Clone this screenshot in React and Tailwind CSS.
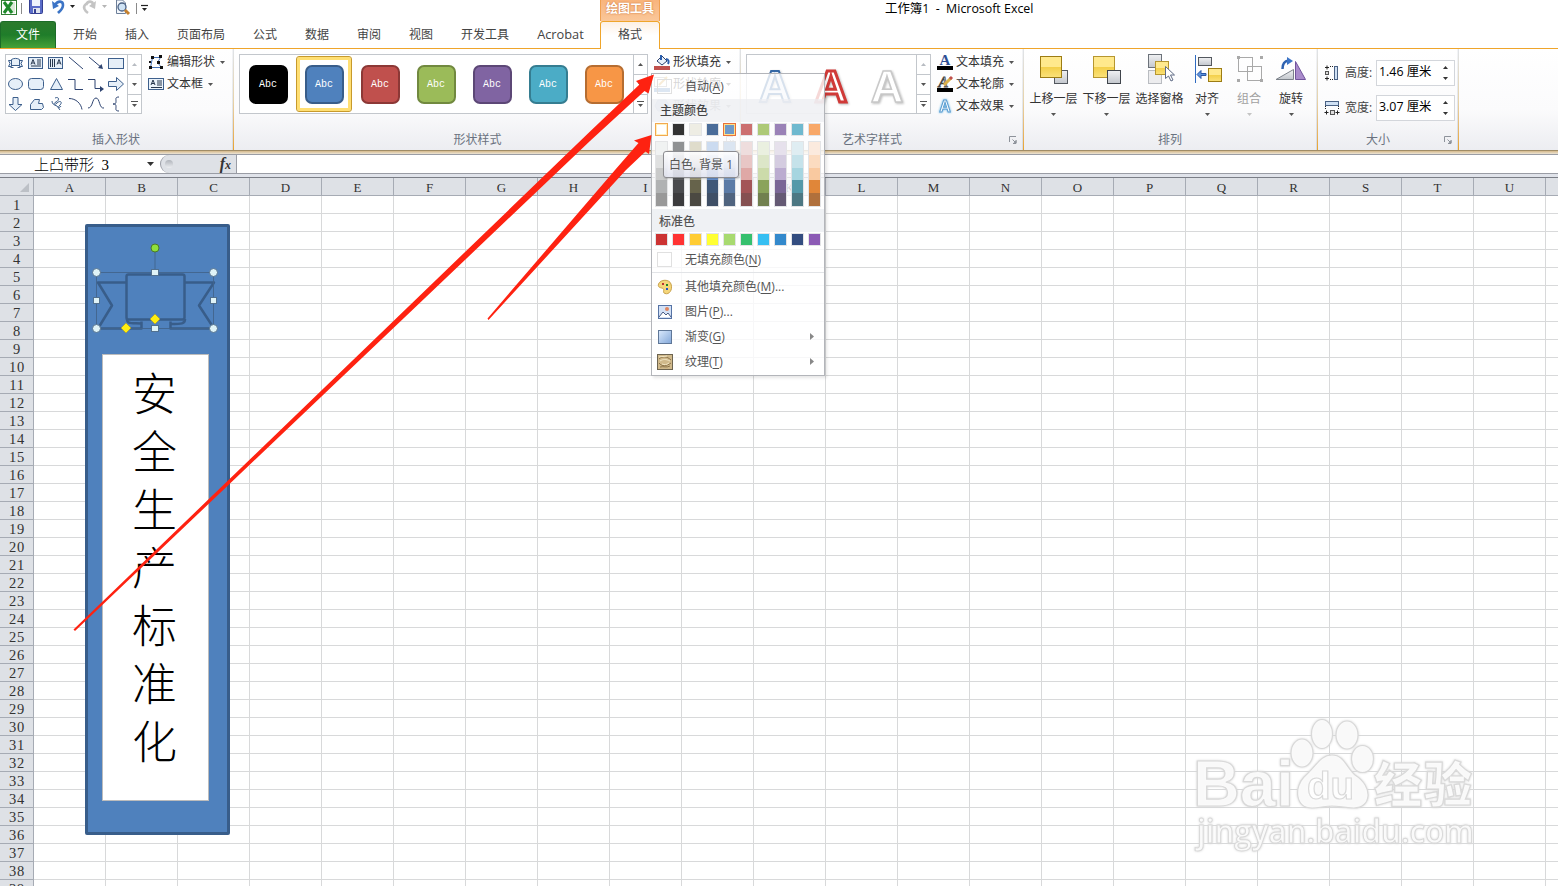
import React from 'react';

const TABS = ['开始', '插入', '页面布局', '公式', '数据', '审阅', '视图', '开发工具', 'Acrobat'];
const COLUMNS = 'ABCDEFGHIJKLMNOPQRSTU'.split('');
const ROWS = Array.from({ length: 39 }, (_, i) => i + 1);

const SHAPE_STYLES = [
  { fill: '#000000', line: '#000000' },
  { fill: '#4f81bd', line: '#385d8a', selected: true },
  { fill: '#c0504d', line: '#8c3836' },
  { fill: '#9bbb59', line: '#71893f' },
  { fill: '#8064a2', line: '#5c4776' },
  { fill: '#4bacc6', line: '#357d91' },
  { fill: '#f79646', line: '#b66d31' },
];

const THEME_TOP = ['#ffffff', '#333333', '#eeede4', '#4a6c99', '#6f99c8', '#cc6f6f', '#adc977', '#9a82b7', '#6fb9cf', '#f8a869'];

const THEME_SHADES = [
  ['#f0f2f2', '#dfe0e0', '#c9caca', '#b0b2b3', '#999999'],
  ['#8f9193', '#77787a', '#5f6063', '#4a4b4e', '#3c3c3e'],
  ['#dfdccb', '#cdc8ae', '#a49f7c', '#66634b', '#4b4942'],
  ['#cbdbf0', '#a3bfe6', '#6a94d0', '#3f5878', '#3f4f66'],
  ['#dbe5f1', '#bccfe7', '#8aaad4', '#5b7ba6', '#50647f'],
  ['#eedddd', '#e8c6c5', '#dfa8a6', '#a35557', '#855051'],
  ['#eaf0e0', '#dce6c8', '#ccdbaa', '#8aa35b', '#71804f'],
  ['#e6e1ec', '#d4cce0', '#bbacd0', '#7a6796', '#655a74'],
  ['#dfedf2', '#c5e2ea', '#a6d5e0', '#5499a9', '#4d7883'],
  ['#fbeade', '#fbdbc0', '#f9c9a0', '#e08639', '#b0703c'],
];

const STANDARD = ['#cc3333', '#ff3333', '#ffcc33', '#ffff33', '#a8da70', '#36c06e', '#36bff2', '#3389cc', '#334d80', '#8c5bb5'];

const Caret = ({ className = '' }) => (
  <svg className={`shrink-0 ${className}`} width="5" height="3" viewBox="0 0 5 3" fill="currentColor">
    <path d="M0 0h5L2.500 3z" />
  </svg>
);

const ScrollButtons = ({ topDisabled }) => (
  <div className="flex w-[14px] flex-col border-l border-[#c3c7cc] text-[#555]">
    <div className={`flex h-[20px] items-center justify-center border-b border-[#c3c7cc] ${topDisabled ? 'text-[#b8bcc2]' : ''}`}>
      <Caret className="rotate-180" />
    </div>
    <div className="flex h-[20px] items-center justify-center border-b border-[#c3c7cc]">
      <Caret />
    </div>
    <div className="flex flex-1 flex-col items-center justify-center gap-[2px]">
      <div className="h-px w-[7px] bg-[#555]"></div>
      <Caret />
    </div>
  </div>
);

const Launcher = ({ className = '' }) => (
  <svg className={className} width="8" height="8" viewBox="0 0 8 8" fill="none" stroke="#8d929a">
    <path d="M.5 6V.5H7M3.500 3.500l3 3M7 4v3.500H4" />
    <path d="M4.500 7h3V4z" fill="#8d929a" stroke="none" />
  </svg>
);

const GroupDivider = () => (
  <div className="flex w-[2px] shrink-0">
    <div className="w-px bg-linear-to-b from-[#f3f4f6] to-[#d5dae2]"></div>
    <div className="w-px bg-linear-to-b from-[#dfe3e8] via-[#e6d3ab] to-[#e8a32a]"></div>
  </div>
);

const Group = ({ label, width, labelShift = '', launcher, children }) => (
  <div className={`flex shrink-0 flex-col ${width}`}>
    <div className="h-[80px] pt-[5px]">{children}</div>
    <div className="flex h-[21px] items-center">
      <span className={`flex-1 text-center text-[#6a7280] ${labelShift}`}>{label}</span>
      {launcher && <Launcher className="mr-[5px]" />}
    </div>
  </div>
);

/* ---------- quick access bar ---------- */

const QuickAccess = () => (
  <div className="flex h-[21px] items-start">
    <svg width="150" height="17" viewBox="0 0 150 17">
      <rect x="1.500" y=".5" width="15" height="14" fill="#fff" stroke="#2f7d32" />
      <rect x="9" y="2" width="6" height="11" fill="#d9ead6" />
      <path d="M4 2l8 11M12 2L4 13" stroke="#1f8a2c" strokeWidth="3" />
      <path d="M21.500 3v11M136.500 3v11" stroke="#8a8a8a" />
      <rect x="29.500" y="-1" width="13" height="14.500" rx="1" fill="#5a6cc8" stroke="#343f92" />
      <rect x="32" y="0" width="8" height="6" fill="#eef3fc" />
      <rect x="33" y="8" width="7" height="5" fill="#dfe4ee" />
      <rect x="34" y="9" width="2" height="4" fill="#343f92" />
      <path d="M55 5c3-5 8-4 8 0 0 4-3 6-5 8" fill="none" stroke="#3c74c6" strokeWidth="2.600" />
      <path d="M52 1l1 8 6-3z" fill="#3c74c6" />
      <path d="M70 5h5l-2.500 3z" fill="#222" />
      <path d="M86 5c2-5 7-4 7 0M86 4c-4 3-1 7 2 9" fill="none" stroke="#c4c4c4" strokeWidth="2.600" />
      <path d="M96 1l-1 8-6-3z" fill="#c4c4c4" />
      <path d="M102 5h5l-2.500 3z" fill="#b5b5b5" />
      <path d="M116.500 0v13.500h9V3l-3-3z" fill="#f4f7fb" stroke="#6d7f99" />
      <circle cx="122" cy="7" r="4" fill="#cfe3f5" stroke="#4a6184" strokeWidth="1.300" />
      <path d="M125 10l4 4" stroke="#c6812e" strokeWidth="3" />
      <path d="M141 5.500h7" stroke="#222" strokeWidth="1.200" />
      <path d="M142 8h5l-2.500 3z" fill="#222" />
    </svg>
    <div className="ml-[450px] flex h-[21px] w-[60px] items-start justify-center border-x border-[#f0a050] bg-linear-to-b from-[#f8b47c] to-[#fac79a] font-bold text-white">
      <span className="leading-[17px] [text-shadow:0_0_2px_#c5692a]">绘图工具</span>
    </div>
    <div className="ml-[225px] whitespace-pre leading-[17px] text-[12.400px] text-black">{'工作簿1  -  Microsoft Excel'}</div>
  </div>
);

const TabBar = () => (
  <div className="flex h-[28px] shrink-0">
    <div className="flex h-[28px] w-[600px] items-stretch border-b border-[#efa52b]">
      <div className="mr-[3px] flex w-[56px] items-center justify-center rounded-t-[3px] border border-b-0 border-[#1c6b28] bg-linear-to-b from-[#2b7a2c] via-[#1f7d2a] to-[#46a238] text-white">
        文件
      </div>
      {TABS.map((tab) => (
        <div key={tab} className="flex items-center px-[14px] whitespace-nowrap text-[#444]">
          {tab === 'Acrobat' ? <span className="text-[12.800px] leading-none">{tab}</span> : tab}
        </div>
      ))}
    </div>
    <div className="flex w-[60px] items-center justify-center rounded-t-[3px] border-x border-t border-[#efa52b] bg-linear-to-b from-[#fdf0e4] to-white to-50% pb-px text-[#444]">
      格式
    </div>
    <div className="flex-1 border-b border-[#efa52b]"></div>
  </div>
);

/* ---------- ribbon ---------- */

const ShapeIcons = () => (
  <svg width="121" height="57" viewBox="0 0 121 57" fill="#e6eff8" stroke="#3d5f8c">
    <path d="M2.500 5.500h3v6h-3l1.500-3zM16.500 5.500h-3v6h3l-1.500-3zM5.500 4.500v6h8v-6c-2-1.500-6-1.500-8 0zM4.500 12.500h3M11.500 12.500h3" />
    <rect x="22.500" y="2.500" width="14" height="11" />
    <path d="M25 9.500l2-5 2 5M26 8h2M31 5h4M31 7h4M31 9h4M25 11h10" fill="none" stroke="#26364d" />
    <rect x="42.500" y="2.500" width="14" height="11" />
    <path d="M44.500 4v8M46.500 4v8M48.500 4v8M51 9.500l2-5 2 5M52 8h2" fill="none" stroke="#26364d" />
    <path d="M63 2l14 12M83 2l13 11" fill="none" stroke="#2d4370" />
    <path d="M97 14l-5-1 3.500-4z" fill="#2d4370" stroke="none" />
    <rect x="102.500" y="3.500" width="15" height="10" />
    <ellipse cx="9.500" cy="29" rx="7" ry="5.500" />
    <rect x="22.500" y="23.500" width="15" height="11" rx="3" />
    <path d="M44.500 34.500L50.500 23.500l6 11z" />
    <path d="M62 24.500h7v10h8M82 24.500h7v9h7" fill="none" stroke="#2d4370" />
    <path d="M98 34l-4-3v6z" fill="#2d4370" stroke="none" />
    <path d="M102.500 26.500h8v-4l7 6.500-7 6.500v-4h-8z" />
    <path d="M7 42.500h5v7h4l-6.500 6-6.500-6h4z" />
    <path d="M24.500 54.500v-5l4-5h5l-1 4h4l1 4-2 2z" />
    <path d="M49 43c5-2 4 3 1 4s-2 4 1 1 6-1 3 2-1 4 1 1M46 46c0 3 2 4 5 5l3 4" fill="none" />
    <path d="M63 43.500c7 0 12 5 13 11M82 53c5 0 4-10 8-10s3 11 8 10M113 42c-4 0-3 2-3 4s0 3-3 3c3 0 3 1 3 3s-1 4 3 4" fill="none" stroke="#2d4370" />
  </svg>
);

const DropLabel = ({ icon, children, caret = 'text-[#555]' }) => (
  <div className="flex h-[22px] items-center gap-[3px] whitespace-nowrap text-[#333]">
    {icon}
    <span>{children}</span>
    <Caret className={`ml-[2px] ${caret}`} />
  </div>
);

const Icon = ({ children }) => (
  <svg className="shrink-0 overflow-visible" width="16" height="16" viewBox="0 0 16 16">
    {children}
  </svg>
);

const InsertShapes = () => (
  <Group label="插入形状" width="w-[232px]">
    <div className="flex">
      <div className="ml-[5px] flex h-[60px] w-[137px] border border-[#c3c7cc] bg-white">
        <ShapeIcons />
        <ScrollButtons topDisabled />
      </div>
      <div className="-mt-[3px] ml-[6px]">
        <DropLabel
          icon={
            <Icon>
              <path d="M4.500 3.500h8l-3 5 4 5h-11l2-10" fill="none" stroke="#4472b8" />
              <path d="M3 2h3v3H3zM11 1h3v3h-3zM1 12h3v3H1zM12 12h3v3h-3zM9 7h3v3H9zM1 7h2v2H1z" fill="#111" />
            </Icon>
          }
        >
          编辑形状
        </DropLabel>
        <DropLabel
          icon={
            <Icon>
              <rect x=".5" y="2.500" width="15" height="11" fill="#eaf2fa" stroke="#3d5f8c" />
              <path d="M3 9l2-5 2 5M4 7.500h2M9 5h5M9 7h5M9 9h5M3 11.500h11" fill="none" stroke="#26364d" />
            </Icon>
          }
        >
          文本框
        </DropLabel>
      </div>
    </div>
  </Group>
);

const ShapeStyles = () => (
  <Group label="形状样式" width="w-[505px]" launcher labelShift="pr-[5px]">
    <div className="flex">
      <div className="ml-[5px] flex h-[60px] w-[409px] border border-[#c3c7cc] bg-white">
        <div className="flex w-[393px] items-center">
          {SHAPE_STYLES.map((s) => (
            <div
              key={s.fill}
              className={`flex h-[56px] w-[56px] items-center justify-center rounded-[3px] ${
                s.selected ? 'border border-[#c79a2c] shadow-[inset_0_0_0_3px_#ffdf73]' : ''
              }`}
            >
              <div
                className="flex h-[39px] w-[39px] items-center justify-center rounded-[7px] border-2 font-['Liberation_Mono'] text-[10px] text-white"
                style={{ background: s.fill, borderColor: s.line }}
              >
                Abc
              </div>
            </div>
          ))}
        </div>
        <ScrollButtons />
      </div>
      <div className="-mt-[3px] ml-[6px]">
        <DropLabel
          icon={
            <Icon>
              <path d="M3 7l5-5 5 5-5 4z" fill="#e9f1fa" stroke="#2d4370" />
              <path d="M7 6V1M12 5c3 0 3 3 2 5" fill="none" stroke="#2b5fae" strokeWidth="2" />
              <rect y="12" width="16" height="4" fill="#c0504d" />
            </Icon>
          }
        >
          形状填充
        </DropLabel>
        <DropLabel
          icon={
            <Icon>
              <rect x=".5" y="1.500" width="12" height="9" fill="#fff" stroke="#999" />
              <path d="M5 9l8-8" stroke="#d9a13a" strokeWidth="2" />
              <rect y="12" width="16" height="4" fill="#4f81bd" />
            </Icon>
          }
        >
          形状轮廓
        </DropLabel>
        <DropLabel
          icon={
            <Icon>
              <path d="M4 2h8l3 5-3 6H4L1 8z" fill="#a9bedf" stroke="#7f97c1" />
            </Icon>
          }
        >
          形状效果
        </DropLabel>
      </div>
    </div>
  </Group>
);

const WordArt = ({ fill, stroke, weight = 2 }) => (
  <svg className="w-[56px]" width="56" height="58" viewBox="0 0 56 58">
    <text
      x="28"
      y="47"
      textAnchor="middle"
      fontFamily="Liberation Sans"
      fontWeight="bold"
      fontSize="45"
      fill={fill}
      stroke={stroke}
      strokeWidth={weight}
      className="drop-shadow-[1px_1px_1px_#bbbbbb]"
    >
      A
    </text>
  </svg>
);

const WordArtStyles = () => (
  <Group label="艺术字样式" width="w-[281px]" launcher labelShift="pr-[6px]">
    <div className="flex">
      <div className="ml-[5px] flex h-[60px] w-[185px] border border-[#c3c7cc] bg-white">
        <div className="flex w-[169px]">
          <WordArt fill="#e8edf5" stroke="#3568a5" />
          <WordArt fill="#ffffff" stroke="#d03a38" weight={3} />
          <WordArt fill="#ffffff" stroke="#c9c9c9" weight={1.5} />
        </div>
        <ScrollButtons topDisabled />
      </div>
      <div className="-mt-[3px] ml-[6px]">
        <DropLabel
          icon={
            <Icon>
              <text x="8" y="11" textAnchor="middle" fontFamily="Liberation Serif" fontWeight="bold" fontSize="15" fill="#2f4f94">A</text>
              <rect y="12" width="16" height="4" fill="#000" />
            </Icon>
          }
        >
          文本填充
        </DropLabel>
        <DropLabel
          icon={
            <Icon>
              <text x="6" y="11" textAnchor="middle" fontFamily="Liberation Serif" fontStyle="italic" fontSize="15" fill="#fff" stroke="#444" strokeWidth=".8">A</text>
              <path d="M7 9l7-7" stroke="#d9b04a" strokeWidth="3" />
              <path d="M13 3l2-2" stroke="#c0504d" strokeWidth="3" />
              <rect y="12" width="16" height="4" fill="#000" />
            </Icon>
          }
        >
          文本轮廓
        </DropLabel>
        <DropLabel
          icon={
            <Icon>
              <text
                x="8"
                y="14"
                textAnchor="middle"
                fontFamily="Liberation Sans"
                fontWeight="bold"
                fontSize="16"
                fill="#fff"
                stroke="#5d9dd0"
                strokeWidth="1"
                className="drop-shadow-[0_0_1px_#5fb4e6]"
              >
                A
              </text>
            </Icon>
          }
        >
          文本效果
        </DropLabel>
      </div>
    </div>
  </Group>
);

const BigButton = ({ label, width, icon, disabled, noCaret }) => (
  <div className={`flex flex-col items-center ${width} ${disabled ? 'text-[#a0a0a0]' : 'text-[#333]'}`}>
    <svg width="32" height="32" viewBox="0 0 32 32">
      {icon}
    </svg>
    <span className="mt-[5px] leading-[16px] whitespace-nowrap">{label}</span>
    {!noCaret && <Caret className={`mt-[6px] ${disabled ? 'text-[#c4c4c4]' : 'text-[#555]'}`} />}
  </div>
);

const Arrange = () => (
  <Group label="排列" width="w-[292px]">
    <svg width="0" height="0" className="block">
      <defs>
        <linearGradient id="gold" x2="0" y2="1">
          <stop offset=".5" stopColor="#ffe98d" />
          <stop offset=".5" stopColor="#f3cf49" />
          <stop offset="1" stopColor="#fbe27a" />
        </linearGradient>
        <linearGradient id="steel" x2="0" y2="1">
          <stop offset="0" stopColor="#f0f1f3" />
          <stop offset="1" stopColor="#c3c7cd" />
        </linearGradient>
      </defs>
    </svg>
    <div className="flex pl-[3px]">
      <BigButton
        label="上移一层"
        width="w-[53px]"
        icon={
          <>
            <rect x="16.500" y="16.500" width="13" height="13" fill="url(#steel)" stroke="#53585f" />
            <rect x="2.500" y="2.500" width="21" height="21" fill="url(#gold)" stroke="#9c7c14" />
          </>
        }
      />
      <BigButton
        label="下移一层"
        width="w-[53px]"
        icon={
          <>
            <rect x="2.500" y="2.500" width="21" height="21" fill="url(#gold)" stroke="#b6962f" />
            <rect x="16.500" y="16.500" width="13" height="13" fill="url(#steel)" stroke="#3f444b" />
          </>
        }
      />
      <BigButton
        label="选择窗格"
        width="w-[53px]"
        noCaret
        icon={
          <>
            <rect x="4.500" y=".5" width="13" height="13" fill="url(#steel)" stroke="#6c727a" />
            <rect x="4.500" y="16.500" width="13" height="13" fill="#ececee" stroke="#b9bcc1" />
            <rect x="11.500" y="7.500" width="13" height="13" fill="url(#gold)" stroke="#b6962f" />
            <path d="M21.500 12.500v12l3-2.500 2.500 5 2-1-2.500-5h4z" fill="#fff" stroke="#5f6b85" />
          </>
        }
      />
      <BigButton
        label="对齐"
        width="w-[42px]"
        icon={
          <>
            <path d="M4.500 1v28" stroke="#2f6bc1" />
            <rect x="7.500" y="3.500" width="13" height="8" fill="url(#steel)" stroke="#53585f" />
            <rect x="17.500" y="14.500" width="13" height="13" fill="url(#gold)" stroke="#9c7c14" />
            <path d="M6 20.500l4-4v3h5v2h-5v3z" fill="#5c93dd" stroke="#2a56a4" />
          </>
        }
      />
      <BigButton
        label="组合"
        width="w-[42px]"
        disabled
        icon={
          <>
            <rect x="5.500" y="3.500" width="14" height="14" fill="none" stroke="#a9a9a9" />
            <rect x="14.500" y="12.500" width="14" height="14" fill="none" stroke="#a9a9a9" />
            <path d="M4 2h3v3H4zM27 2h3v3h-3zM4 25h3v3H4zM27 25h3v3h-3z" fill="#a9a9a9" />
          </>
        }
      />
      <BigButton
        label="旋转"
        width="w-[42px]"
        icon={
          <>
            <path d="M1 25.500L18.500 15.500v10z" fill="url(#steel)" stroke="#7c828a" />
            <path d="M20.500 7.500v18h10z" fill="#a98bcb" stroke="#72549c" />
            <path d="M7.500 15c0-5 2-8 6-8.500" fill="none" stroke="#2f62b0" strokeWidth="2.500" />
            <path d="M12 3l6 4-6 4z" fill="#3c74c6" />
          </>
        }
      />
    </div>
  </Group>
);

const SizeField = ({ label, value, icon }) => (
  <div className="flex items-center pl-[6px]">
    <div className="mr-[5px]">
      <Icon>{icon}</Icon>
    </div>
    <span className="w-[31px] whitespace-nowrap text-[#444]">{label}:</span>
    <div className="flex h-[26px] w-[79px] items-center justify-between border border-[#d3d6db] bg-white pr-[6px] pl-[2px] text-black">
      <span className="pb-px text-[12.400px] whitespace-nowrap">{value}</span>
      <div className="flex flex-col gap-[8px] text-[#333]">
        <Caret className="rotate-180" />
        <Caret />
      </div>
    </div>
  </div>
);

const Size = () => (
  <Group label="大小" width="w-[139px]" launcher labelShift="pr-[6px]">
    <div className="flex flex-col gap-[9px] pt-[6px]">
      <SizeField
        label="高度"
        value="1.46 厘米"
        icon={
          <>
            <path d="M1 2.500h4M3 .5v4M1 13.500h4M3 11.500v4" stroke="#222" />
            <path d="M6 1.500h5M6 14.500h5" stroke="#222" strokeDasharray="1 1" />
            <rect x="1.500" y="6.500" width="3" height="3" fill="#ddd" stroke="#555" />
            <rect x="10.500" y="1.500" width="3" height="13" fill="#cfe0f3" stroke="#4a6184" />
          </>
        }
      />
      <SizeField
        label="宽度"
        value="3.07 厘米"
        icon={
          <>
            <rect x="1.500" y="1.500" width="13" height="4" fill="#cfe0f3" stroke="#4a6184" />
            <path d="M.5 12.500h4M2.500 10.500v4M11.500 12.500h4M13.500 10.500v4" stroke="#222" />
            <path d="M1.500 6v4M14.500 6v4" stroke="#222" strokeDasharray="1 1" />
            <rect x="6.500" y="10.500" width="4" height="4" fill="#ddd" stroke="#555" />
          </>
        }
      />
    </div>
  </Group>
);

const Ribbon = () => (
  <div className="flex h-[101px] shrink-0 bg-linear-to-b from-white via-[#fbfbfc] via-60% to-[#ecedf1]">
    <InsertShapes />
    <GroupDivider />
    <ShapeStyles />
    <GroupDivider />
    <WordArtStyles />
    <GroupDivider />
    <Arrange />
    <GroupDivider />
    <Size />
    <GroupDivider />
  </div>
);

const FormulaBar = () => (
  <div className="flex h-[20px] shrink-0 border-y border-[#9a9da5] bg-white">
    <div className="flex w-[160px] items-center pr-[6px] text-black">
      <span className="flex-1 pl-[34px] text-[15px] leading-[18px] font-light whitespace-pre">
        上凸带形<span className="font-['Liberation_Serif']">{'  3'}</span>
      </span>
      <svg width="7" height="4" viewBox="0 0 7 4"><path d="M0 0h7L3.500 4z" fill="#333" /></svg>
    </div>
    <div className="flex w-[77px] items-center justify-between rounded-l-full border-r border-l border-[#9a9da5] bg-[#dee1e6] pr-[5px] pl-[4px]">
      <div className="h-[8px] w-[8px] rounded-full bg-linear-to-b from-[#b0b4bb] to-[#eceef1]"></div>
      <span className="font-['Liberation_Serif'] text-[16px] leading-[16px] font-bold text-[#333] italic">
        f<span className="text-[12px]">x</span>
      </span>
    </div>
  </div>
);

/* ---------- worksheet ---------- */

const Sheet = () => (
  <div className="shrink-0 font-['Liberation_Serif','Noto_Sans_CJK_SC',serif] text-[14.500px] text-[#333]">
    <div className="flex h-[18px] border-b border-[#a6abb4] bg-[#dee1e6]">
      <div className="flex w-[34px] shrink-0 items-end justify-end border-r border-[#a6abb4] pr-[4px] pb-[3px]">
        <svg width="9" height="9" viewBox="0 0 9 9"><path d="M9 0v9H0z" fill="#bcc0c6" /></svg>
      </div>
      {COLUMNS.map((c) => (
        <div key={c} className="flex w-[72px] shrink-0 items-center justify-center border-r border-[#a6abb4] pt-[3px] text-[13px]">
          {c}
        </div>
      ))}
    </div>
    {ROWS.map((n) => (
      <div key={n} className="flex h-[18px]">
        <div className="flex w-[34px] shrink-0 items-center justify-center border-r border-b border-[#a6abb4] bg-[#dee1e6] pt-[3px] pl-px tracking-[0.7px]">
          {n}
        </div>
        {COLUMNS.map((c) => (
          <div key={c} className="w-[72px] shrink-0 border-r border-b border-[#d8d9da]"></div>
        ))}
        <div className="flex-1 border-b border-[#d8d9da]"></div>
      </div>
    ))}
  </div>
);

const Banner = () => (
  <div className="absolute top-[224px] left-[85px] h-[611px] w-[145px] rounded-[2px] border-3 border-[#385d8a] bg-[#4f81bd]">
    <div className="mt-[127px] ml-[14px] flex h-[447px] w-[107px] flex-col items-center border border-[#bcbcbc] bg-white pt-[10px] pr-[2px] text-[45px] leading-[58px] font-light text-black">
      {'安全生产标准化'.split('').map((ch) => (
        <span key={ch}>{ch}</span>
      ))}
    </div>
  </div>
);

const RibbonShape = () => (
  <svg className="absolute top-[240px] left-[90px]" width="132" height="96" viewBox="90 240 132 96">
    <g fill="none" stroke="#385d8a" strokeWidth="2.500" strokeLinejoin="round">
      <path d="M126 282.500H98L112 305.500 98 328.500h43.500v-7M185 282.500h29L199 305.500l15 23h-43.500v-7" />
      <rect x="126.500" y="274.500" width="58" height="45" rx="2" />
      <path d="M127 319c0 5 3 4 14 4.500M185 319c0 5-3 5-15 5" />
    </g>
    <path d="M96.500 272.500h117v56h-117zM155 251v21" fill="none" stroke="#42648c" strokeWidth=".9" />
    <g fill="#dff3f7" stroke="#51708f">
      <circle cx="96.500" cy="272.500" r="4" />
      <circle cx="213.500" cy="272.500" r="4" />
      <circle cx="96.500" cy="328.500" r="4" />
      <circle cx="213.500" cy="328.500" r="4" />
      <rect x="151.500" y="269.500" width="7" height="6" />
      <rect x="151.500" y="325.500" width="7" height="6" />
      <rect x="93.500" y="297.500" width="6" height="6" />
      <rect x="210.500" y="297.500" width="6" height="6" />
    </g>
    <circle cx="155" cy="248" r="4" fill="#8fe03c" stroke="#4b7a2a" />
    <path d="M155 314l5 5-5 5-5-5zM126 323l5 5-5 5-5-5z" fill="#ffee10" stroke="#a89a30" strokeWidth=".7" />
  </svg>
);

/* ---------- fill colour menu ---------- */

const Swatch = ({ color, state = '' }) => (
  <div className={`h-[13px] w-[13px] border ${state || 'border-[#e3e4e6]'}`} style={{ background: color }}></div>
);

const MenuItem = ({ icon, label, hotkey, dots, arrow }) => (
  <div className="flex h-[25px] shrink-0 items-center pl-[5px]">
    <div className="w-[16px]">{icon}</div>
    <div className="flex-1 pl-[12px]">
      {label}(<span className="underline underline-offset-2">{hotkey}</span>){dots && '...'}
    </div>
    {arrow && (
      <svg className="mr-[10px]" width="4" height="7" viewBox="0 0 4 7"><path d="M0 0l4 3.500L0 7z" fill="#888" /></svg>
    )}
  </div>
);

const FillMenu = () => (
  <div className="absolute top-[73px] left-[651px] flex h-[303px] w-[174px] flex-col border border-[#b3b5ba] bg-white/80 text-[#555] shadow-[2px_2px_3px_#0000001a]">
    <MenuItem label="自动" hotkey="A" icon={<div className="h-[15px] w-[15px] border border-[#e0e0e0]"></div>} />
    <div className="flex h-[23px] items-center bg-[#ebedf1]/70 pl-[8px] font-medium text-[#444]">主题颜色</div>
    <div className="flex gap-[4px] pt-[1px] pl-[3px]">
      {THEME_TOP.map((c, i) => (
        <Swatch
          key={c}
          color={c}
          state={
            i === 0
              ? 'border-[#f2a94f] shadow-[inset_0_0_0_1px_#fff0bf]'
              : i === 4
                ? 'border-[#e8713a] shadow-[inset_0_0_0_1px_#ffe08a]'
                : ''
          }
        />
      ))}
    </div>
    <div className="mt-[5px] flex h-[67px] gap-[4px] pl-[3px]">
      {THEME_SHADES.map((shades) => (
        <div key={shades[0]} className="flex h-[66px] w-[13px] flex-col border border-[#e3e4e6]">
          {shades.map((c) => (
            <div key={c} className="flex-1" style={{ background: c }}></div>
          ))}
        </div>
      ))}
    </div>
    <div className="mt-[1px] flex h-[23px] items-center bg-[#eff1f4] pt-[2px] pl-[7px] font-medium">标准色</div>
    <div className="flex gap-[4px] pt-[1px] pl-[3px]">
      {STANDARD.map((c) => (
        <Swatch key={c} color={c} />
      ))}
    </div>
    <div className="mt-px">
      <MenuItem label="无填充颜色" hotkey="N" icon={<div className="h-[15px] w-[15px] border border-[#e0e0e0] bg-white"></div>} />
    </div>
    <div className="mb-px h-px shrink-0 bg-[#e2e4e7]"></div>
    <MenuItem
      label="其他填充颜色"
      hotkey="M"
      dots
      icon={
        <Icon>
          <path d="M1.500 5c2-5 11-5 12.500 0 2 6-2 11-6 9.500-3-1 0-4-2-5S.5 9 1.500 5z" fill="#f5d67a" stroke="#c9a24c" />
          <path d="M5 4h2v2H5z" fill="#b33" />
          <path d="M9 5h2v2H9z" fill="#282" />
          <path d="M9 9h2v2H9z" fill="#25c" />
        </Icon>
      }
    />
    <MenuItem
      label="图片"
      hotkey="P"
      dots
      icon={
        <Icon>
          <rect x="1.500" y="1.500" width="13" height="13" fill="#d3e1f6" stroke="#5673a5" />
          <path d="M2 13l4-5 3 3 2-2 3 4" fill="#fff" stroke="#4a5d86" />
          <circle cx="10" cy="5" r="2" fill="#e0855f" />
        </Icon>
      }
    />
    <MenuItem
      label="渐变"
      hotkey="G"
      arrow
      icon={<div className="ml-px h-[14px] w-[14px] border border-[#5f7798] bg-linear-to-br from-[#d8e7fb] to-[#86aada]"></div>}
    />
    <MenuItem
      label="纹理"
      hotkey="T"
      arrow
      icon={
        <Icon>
          <rect x=".5" y=".5" width="15" height="15" fill="#d0b98b" stroke="#6d6450" />
          <path d="M2 5c3-3 8-3 12 1M2 9c3 4 8 3 12 0M3 13c4-1 6 1 10-1" fill="none" stroke="#8b7247" />
          <path d="M3 7c3-2 6-2 10 0M5 10c3 1 4 1 7-1M2 3c3-1 5 0 8-1" fill="none" stroke="#f2e6c4" />
        </Icon>
      }
    />
  </div>
);

const Tooltip = () => (
  <div className="absolute top-[151px] left-[663px] flex h-[27px] w-[76px] items-center justify-center rounded-[3px] border border-[#8c8c90] bg-linear-to-b from-white/90 to-[#e2e4f0]/90 whitespace-nowrap text-[#555] shadow-[1px_1px_2px_#00000033]">
    白色, 背景 1
  </div>
);

const Arrows = () => (
  <svg className="pointer-events-none absolute inset-0" width="1558" height="886" viewBox="0 0 1558 886" fill="#fe2211">
    <path d="M73.500 629.500L590 131.500 639.500 84.500 636 81 654 74.500 648.500 93.500 644.500 91 590 141 75 631z" />
    <path d="M487.500 318.500L615 170 638.500 143 634 140.500 651.500 135 649 154 645.500 151.500 626 170 488.500 320z" />
  </svg>
);

const Watermark = () => (
  <svg className="absolute top-[710px] left-[1190px]" width="295" height="150" viewBox="1190 710 295 150" fill="#fff" stroke="#d9d9d9">
    <g fillOpacity=".85" strokeWidth="1.200" className="drop-shadow-[0_0_1px_#d5d5d5]">
      <text x="1193" y="806" fontFamily="Liberation Sans" fontWeight="bold" fontSize="64" textLength="101" lengthAdjust="spacingAndGlyphs">Bai</text>
      <ellipse cx="1302" cy="753" rx="11" ry="14" />
      <ellipse cx="1322" cy="734" rx="10.500" ry="14.500" />
      <ellipse cx="1347" cy="735" rx="11" ry="14" />
      <ellipse cx="1362.500" cy="759" rx="11" ry="13.500" />
      <path d="M1332 755c12 0 14 12 23 20 19 12 16 33-1 33-10 0-14-2-22-2s-12 2-20 2c-17 0-18-21-8-31 12-10 16-22 28-22z" />
      <text x="1307" y="799" fontFamily="Liberation Sans" fontWeight="bold" fontSize="39" textLength="47" lengthAdjust="spacingAndGlyphs">du</text>
      <text x="1374" y="802" fontFamily="Noto Sans CJK SC" fontWeight="900" fontSize="48" textLength="98">经验</text>
      <text x="1197" y="843" fontFamily="Open Sans" fontWeight="600" fontSize="32" textLength="277" lengthAdjust="spacingAndGlyphs" strokeWidth="1">jingyan.baidu.com</text>
    </g>
  </svg>
);

const App = () => {
  return (
    <div className="relative flex h-[886px] w-[1558px] flex-col overflow-hidden bg-white font-['Open_Sans','Noto_Sans_CJK_SC',sans-serif] text-[12px]">
      <QuickAccess />
      <TabBar />
      <Ribbon />
      <div className="h-px shrink-0 bg-[#a08c66]"></div>
      <div className="h-[3px] shrink-0 bg-linear-to-b from-[#d5b98a] to-[#ece4d6]"></div>
      <FormulaBar />
      <div className="h-[4px] shrink-0 border-b border-[#7a7e86] bg-[#e0e3ea]"></div>
      <Sheet />
      <Banner />
      <RibbonShape />
      <Watermark />
      <FillMenu />
      <Tooltip />
      <Arrows />
    </div>
  );
};

export default App;
